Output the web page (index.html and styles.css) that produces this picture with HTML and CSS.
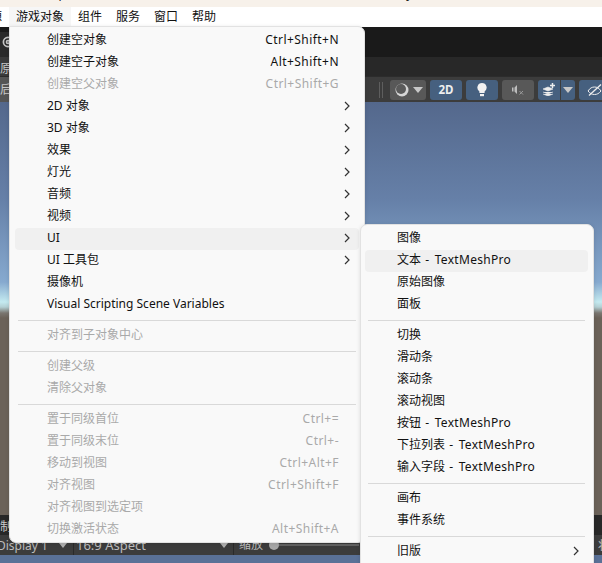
FILE: index.html
```html
<!DOCTYPE html>
<html lang="zh-CN">
<head>
  <meta charset="UTF-8" />
  <title>Unity 游戏对象菜单</title>
  <link rel="stylesheet" href="styles.css">
</head>
<body>
  <div class="app">
    <div class="titlebar"><span class="title-text">SampleScene - 我的项目_提升学习路径 - Windows, Mac, Linux - Unity</span></div>
    <div class="menubar">
      <span class="menubar-item cut">资源</span>
      <span class="menubar-item active">游戏对象</span>
      <span class="menubar-item">组件</span>
      <span class="menubar-item">服务</span>
      <span class="menubar-item">窗口</span>
      <span class="menubar-item">帮助</span>
    </div>

    <div class="editor">
      <div class="row-top">
        <div class="edge edge-top">
          <svg class="gear" width="14" height="14" viewBox="0 0 14 14"><circle cx="7" cy="7" r="4.600"/><circle cx="7" cy="7" r="1.500"/></svg>
        </div>
      </div>
      <div class="row-second"><div class="edge"><span>原</span></div></div>
      <div class="toolbar">
        <div class="edge edge-light"><span>后</span></div>
        <div class="toolbar-space"></div>
        <div class="handle"></div>
        <div class="tool tool-grey tool-sky">
          <svg width="16" height="16" viewBox="0 0 16 16"><circle cx="8" cy="8" r="6.500" fill="#d6d6d6"/><circle cx="7" cy="7" r="5" fill="#5a5a5a"/></svg>
          <i class="caret"></i>
        </div>
        <div class="tool tool-blue">2D</div>
        <div class="tool tool-blue">
          <svg width="12" height="14" viewBox="0 0 12 14"><path d="M6 0a4.600 4.600 0 0 0-2.600 8.400V10h5.200V8.400A4.600 4.600 0 0 0 6 0z" fill="#f2f2f2"/><rect x="4" y="11" width="4" height="2.200" fill="#f2f2f2"/></svg>
        </div>
        <div class="tool tool-grey">
          <svg width="13" height="12" viewBox="0 0 13 12"><path d="M0 3.500h1.500v4H0zM2.500 3.500L5 1v9L2.500 7.500z" fill="#bdbdbd"/><path d="M7.500 7l3.500 3.500M11 7l-3.500 3.500" stroke="#9a9a9a" fill="none"/></svg>
        </div>
        <div class="tool tool-blue tool-split">
          <svg width="14" height="13" viewBox="0 0 14 13"><path d="M1 6l5-2 5 2-5 2zM1 9l5 2 5-2M1 11l5 2 5-2" fill="#eee" stroke="#eee" stroke-width=".6"/><path d="M10.500 0v5M8 2.500h5" stroke="#eee" stroke-width="1.500"/></svg>
        </div>
        <div class="tool tool-blue tool-arrow"><i class="caret"></i></div>
        <div class="tool tool-blue tool-eye">
          <svg width="16" height="12" viewBox="0 0 16 12"><path d="M1 7c2-3 4-4 6.500-4S12 4 14 7c-2 2.500-4 3.500-6.500 3.500S3 9.500 1 7z" fill="none" stroke="#eee"/><path d="M2 11.500L14 .5" stroke="#eee" stroke-width="1.300"/></svg>
        </div>
      </div>
      <div class="scene"></div>
      <div class="game-tabs"><div class="edge"><span>制</span></div></div>
      <div class="game-bar">
        <span class="display">Display 1</span><i class="caret caret-dim"></i>
        <span class="aspect">16:9 Aspect</span><i class="caret caret-dim"></i>
        <span class="zoom-label">缩放</span>
        <div class="slider"><i class="knob"></i></div>
        <span class="state">状态</span>
      </div>
      <div class="game-view"></div>
    </div>

    <div class="menu menu-main">
      <div class="item"><span class="label">创建空对象</span><span class="keys">Ctrl+Shift+N</span><span class="arrow"></span></div>
      <div class="item"><span class="label">创建空子对象</span><span class="keys">Alt+Shift+N</span><span class="arrow"></span></div>
      <div class="item off"><span class="label">创建空父对象</span><span class="keys">Ctrl+Shift+G</span><span class="arrow"></span></div>
      <div class="item"><span class="label">2D 对象</span><span class="arrow"><svg width="6" height="10" viewBox="0 0 6 10"><path d="M1 1l4 4-4 4"/></svg></span></div>
      <div class="item"><span class="label">3D 对象</span><span class="arrow"><svg width="6" height="10" viewBox="0 0 6 10"><path d="M1 1l4 4-4 4"/></svg></span></div>
      <div class="item"><span class="label">效果</span><span class="arrow"><svg width="6" height="10" viewBox="0 0 6 10"><path d="M1 1l4 4-4 4"/></svg></span></div>
      <div class="item"><span class="label">灯光</span><span class="arrow"><svg width="6" height="10" viewBox="0 0 6 10"><path d="M1 1l4 4-4 4"/></svg></span></div>
      <div class="item"><span class="label">音频</span><span class="arrow"><svg width="6" height="10" viewBox="0 0 6 10"><path d="M1 1l4 4-4 4"/></svg></span></div>
      <div class="item"><span class="label">视频</span><span class="arrow"><svg width="6" height="10" viewBox="0 0 6 10"><path d="M1 1l4 4-4 4"/></svg></span></div>
      <div class="item hover"><span class="label">UI</span><span class="arrow"><svg width="6" height="10" viewBox="0 0 6 10"><path d="M1 1l4 4-4 4"/></svg></span></div>
      <div class="item"><span class="label">UI 工具包</span><span class="arrow"><svg width="6" height="10" viewBox="0 0 6 10"><path d="M1 1l4 4-4 4"/></svg></span></div>
      <div class="item"><span class="label">摄像机</span></div>
      <div class="item"><span class="label">Visual Scripting Scene Variables</span></div>
      <div class="sep"></div>
      <div class="item off"><span class="label">对齐到子对象中心</span></div>
      <div class="sep"></div>
      <div class="item off"><span class="label">创建父级</span></div>
      <div class="item off"><span class="label">清除父对象</span></div>
      <div class="sep"></div>
      <div class="item off"><span class="label">置于同级首位</span><span class="keys">Ctrl+=</span><span class="arrow"></span></div>
      <div class="item off"><span class="label">置于同级末位</span><span class="keys">Ctrl+-</span><span class="arrow"></span></div>
      <div class="item off"><span class="label">移动到视图</span><span class="keys">Ctrl+Alt+F</span><span class="arrow"></span></div>
      <div class="item off"><span class="label">对齐视图</span><span class="keys">Ctrl+Shift+F</span><span class="arrow"></span></div>
      <div class="item off"><span class="label">对齐视图到选定项</span></div>
      <div class="item off"><span class="label">切换激活状态</span><span class="keys">Alt+Shift+A</span><span class="arrow"></span></div>
    </div>

    <div class="menu menu-sub">
      <div class="item"><span class="label">图像</span></div>
      <div class="item hover"><span class="label">文本 <span class="tmp">- TextMeshPro</span></span></div>
      <div class="item"><span class="label">原始图像</span></div>
      <div class="item"><span class="label">面板</span></div>
      <div class="sep"></div>
      <div class="item"><span class="label">切换</span></div>
      <div class="item"><span class="label">滑动条</span></div>
      <div class="item"><span class="label">滚动条</span></div>
      <div class="item"><span class="label">滚动视图</span></div>
      <div class="item"><span class="label">按钮 <span class="tmp">- TextMeshPro</span></span></div>
      <div class="item"><span class="label">下拉列表 <span class="tmp">- TextMeshPro</span></span></div>
      <div class="item"><span class="label">输入字段 <span class="tmp">- TextMeshPro</span></span></div>
      <div class="sep"></div>
      <div class="item"><span class="label">画布</span></div>
      <div class="item"><span class="label">事件系统</span></div>
      <div class="sep"></div>
      <div class="item"><span class="label">旧版</span><span class="arrow"><svg width="6" height="10" viewBox="0 0 6 10"><path d="M1 1l4 4-4 4"/></svg></span></div>
    </div>
  </div>
</body>
</html>
```

FILE: styles.css
```css
html, body { margin: 0; padding: 0; }
body { font-family: "Noto Sans", "Noto Sans CJK SC", sans-serif; font-size: 12px; color: #111; background: #fff; }
.app { position: relative; width: 602px; height: 563px; overflow: hidden; }

.titlebar { height: 7px; background: #f7f1ea; overflow: hidden; padding-left: 34px; font-size: 12px; line-height: 7px; white-space: nowrap; color: #222; }
.title-text { display: block; margin-top: -10px; }

.menubar { display: flex; height: 20px; background: #fff; white-space: nowrap; }
.menubar-item { padding: 0 7px; width: 24px; line-height: 19px; }
.menubar-item.active { background: #f6f6f6; width: 48px; }
.menubar-item.cut { margin-left: -29px; }

.editor { display: flex; flex-direction: column; height: 536px; background: #1a1a1a; }
.edge { width: 9px; height: 100%; overflow: hidden; flex: none; line-height: 23px; color: #c8c8c8; white-space: nowrap; }
.row-top { height: 30px; flex: none; padding-top: 5px; box-sizing: border-box; }
.edge-top { background: #2a2a2a; }
.gear { display: block; margin: 3px 0 0 1px; fill: none; stroke: #c4c4c4; stroke-width: 1.700; }
.row-second { height: 19px; flex: none; background: #282828; }
.row-second .edge { background: #3a3a3a; }
.toolbar { display: flex; align-items: center; gap: 4px; height: 26px; flex: none; background: #3c3c3c; overflow: hidden; border-top: 1px solid #2c2c2c; box-sizing: border-box; }
.edge-light { background: #555; margin-right: -4px; line-height: 25px; }
.toolbar-space { width: 366px; flex: none; }
.handle { width: 2px; height: 16px; border-left: 1px solid #5e5e5e; border-right: 1px solid #5e5e5e; margin-right: 3px; flex: none; }
.tool { display: flex; align-items: center; justify-content: center; width: 32px; height: 20px; border-radius: 3px; flex: none; color: #eee; font-weight: 700; font-size: 11.500px; }
.tool-blue { background: #46607f; }
.tool-grey { background: #585858; }
.tool-sky { width: 36px; gap: 3px; }
.tool-split { width: 22px; border-radius: 3px 0 0 3px; margin-right: -3px; }
.tool-arrow { width: 14px; border-radius: 0 3px 3px 0; }
.tool-eye { width: 32px; }
.caret { display: block; width: 0; height: 0; border-left: 5px solid transparent; border-right: 5px solid transparent; border-top: 6px solid #c8c8c8; flex: none; }

.scene { height: 413px; flex: none; background: linear-gradient(#54688c 0, #6680a8 98px, #86a9cf 180px, #c4eaf0 200px, #b4d0d4 205px, #7a7670 211px, #6b6259 216px, #6b6259 100%); }

.game-tabs { height: 20px; flex: none; background: #282828; }
.game-tabs .edge { line-height: 24px; margin-top: 0; }
.game-bar { display: flex; align-items: center; height: 20px; flex: none; background: #3c3c3c; color: #bdbdbd; white-space: nowrap; overflow: hidden; font-size: 13px; }
.display { margin-left: -3px; width: 62px; flex: none; font-size: 12px; }
.aspect { margin-left: 6px; padding-left: 2px; border-left: 1px solid #2a2a2a; width: 144px; flex: none; line-height: 20px; }
.caret-dim { border-top-color: #b0b0b0; border-left-width: 4px; border-right-width: 4px; border-top-width: 5px; }
.zoom-label { margin-left: 5px; padding-left: 5px; border-left: 1px solid #2a2a2a; font-size: 12px; line-height: 20px; }
.slider { position: relative; width: 90px; height: 2px; margin-left: 6px; background: #636363; flex: none; }
.knob { position: absolute; left: 0; top: -4px; width: 10px; height: 10px; border-radius: 50%; background: #a8a8a8; }
.state { margin-left: 239px; font-size: 12px; flex: none; }
.game-view { flex: 1; background: #5a7197; }

.menu { position: absolute; box-sizing: border-box; padding: 3px 5px; background: #f9f9f9; border: 1px solid #e2e2e2; border-radius: 7px; box-shadow: 0 1px 4px rgba(0,0,0,0.12); }
.menu-main { left: 9px; top: 26px; width: 356px; height: 517px; border-top-left-radius: 0; }
.menu-sub { left: 360px; top: 224px; width: 234px; height: 350px; padding-left: 4px; }
.item { display: flex; align-items: center; height: 22px; line-height: 20px; padding-left: 32px; padding-bottom: 2px; box-sizing: border-box; border-radius: 4px; white-space: nowrap; }
.item .label { flex: 1; }
.item .keys { text-align: right; letter-spacing: .45px; }
.item .arrow { display: flex; align-items: center; justify-content: flex-start; width: 20px; padding-left: 5px; box-sizing: border-box; flex: none; }
.arrow svg { display: block; fill: none; stroke: #333; stroke-width: 1.200; }
.tmp { margin-left: 1px; word-spacing: 2px; letter-spacing: .3px; }
.item.hover { background: #f0f0f0; }
.item.off { color: #a9a9a9; }
.sep { height: 1px; margin: 4px 3px; background: #d9d9d9; }
```
